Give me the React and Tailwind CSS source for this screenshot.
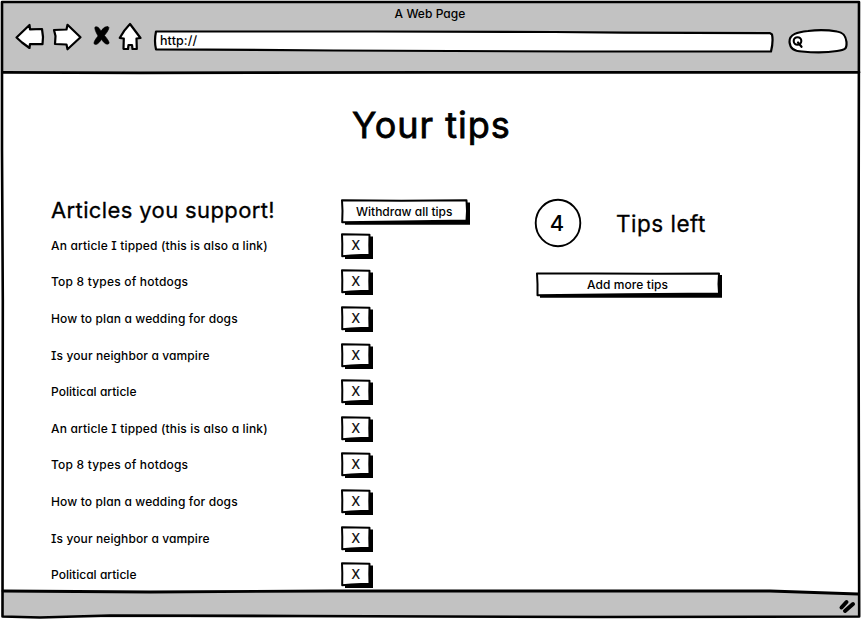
const ARTICLES = [
  { title: "An article I tipped (this is also a link)", spacing: "tracking-[0.16px]" },
  { title: "Top 8 types of hotdogs", spacing: "tracking-[0.2px]" },
  { title: "How to plan a wedding for dogs", spacing: "tracking-[0.13px]" },
  { title: "Is your neighbor a vampire", spacing: "tracking-[0.11px]" },
  { title: "Political article", spacing: "tracking-[0.03px]" },
];
const ROWS = [...ARTICLES, ...ARTICLES];

function SketchFrame({ width, height, children }) {
  return (
    <svg
      className="pointer-events-none absolute left-0 top-0 overflow-visible"
      width={width}
      height={height}
      viewBox={`0 0 ${width} ${height}`}
      fill="none"
      stroke="#000"
      strokeWidth="2"
      strokeLinejoin="round"
      strokeLinecap="round"
    >
      {children}
    </svg>
  );
}

function RemoveButton() {
  return (
    <button className="relative h-[26px] w-[32px] shrink-0 text-[12.5px] font-normal">
      <SketchFrame width={32} height={26}>
        <path d="M4 26 V22 L29 21 L28.500 3.500 H32 V26 Z" fill="#000" stroke="none" />
        <path d="M1 1.300 Q14 1.500 28.500 1.800 L28.300 12 L28.500 21.800 L20 22 L10 22.600 L1.200 23.200 L1.300 11 Z" fill="#fff" />
      </SketchFrame>
      <span className="absolute left-[10.500px] top-[4px] leading-[18px] [-webkit-text-stroke:0.2px_#000]">X</span>
    </button>
  );
}

function WithdrawButton() {
  return (
    <button className="relative block h-[26px] w-[129px] text-[12px]">
      <SketchFrame width={129} height={26}>
        <path d="M4 25.800 V22 L126 21 V3.500 H129 V25.800 Z" fill="#000" stroke="none" />
        <path d="M1 1.200 L60 1.800 L125.500 1.200 L126 12 L125.500 21.500 L60 22.400 L1.200 23.200 L1.500 12 Z" fill="#fff" />
      </SketchFrame>
      <span className="absolute left-[15px] top-[4px] whitespace-nowrap leading-[18px]">Withdraw all tips</span>
    </button>
  );
}

function AddButton() {
  return (
    <button className="relative block h-[26px] w-[186px] text-[12px]">
      <SketchFrame width={186} height={26}>
        <path d="M4 25.800 V22 L183 21 V3 H186 V25.800 Z" fill="#000" stroke="none" />
        <path d="M1 1.500 L60 1.600 L120 1.800 L183 1.500 L182.500 12 L183 21.500 L90 22.300 L1.500 23.300 L1.500 12 Z" fill="#fff" />
      </SketchFrame>
      <span className="absolute left-[51px] top-[4px] whitespace-nowrap leading-[18px] tracking-[0.08px]">Add more tips</span>
    </button>
  );
}

function BrowserBar() {
  return (
    <header className="relative h-[73px] shrink-0 bg-[#c2c2c2]">
      <p className="h-[26px] pr-[1px] pt-[5px] text-center text-[12px] leading-[18px] tracking-[0.05px]">A Web Page</p>
      <nav className="flex">
        <svg width="150" height="34" viewBox="0 22 150 34" className="-mt-1 shrink-0" fill="#fff" stroke="#000" strokeWidth="2.2" strokeLinejoin="round">
          <path d="M16.500 37.500 L29.500 25 L30 29.300 L42 29 L43 37 L42.500 44.200 L30 44 L29.500 48 L22 42.500 Z" />
          <path d="M54 30 L66.500 29.500 L67.500 24.800 L80.500 37.300 L67.500 49.300 L66.500 44.500 L55 44 L55.500 36 Z" />
          <path d="M130 24 L140.500 38 L136.500 38.500 L136.800 49 L132.500 49 L132 45 H128.500 L128 49 L123.500 48.800 L123.800 38.500 L119.700 38 Q124 30 130 24 Z" />
          <path d="M95 27 Q98 25.500 101 31 Q104 26 108 26.500 Q111 27.500 104.500 35.500 Q110 42 109 43.500 Q106 46 101.500 39.500 Q97 46 94.200 44 Q93 42 98 36 Q94 29 95 27 Z" fill="#000" stroke="#000" strokeWidth="0.6" />
        </svg>
        <div className="relative ml-[4px] mt-[4px] h-[22px] w-[620px]">
          <SketchFrame width={620} height={22}>
            <path d="M2 1.500 L220 1.500 L400 2 L470 2.600 L616 3.200 L618 4.500 Q619.500 11 617 21.500 L420 21.500 L180 20.500 L2 19.300 Q0 11 2 1.500 Z" fill="#fff" strokeWidth="2.200" />
          </SketchFrame>
          <span className="absolute left-[6px] top-[2px] text-[12.5px] leading-[18px] tracking-[0.1px]">http://</span>
        </div>
        <div className="relative ml-[14px] mt-[2px] h-[26px] w-[60px]">
          <SketchFrame width={60} height={26}>
            <path d="M1.500 14 C1 6 10 4 20 3 Q35 1 49 3.500 C57 4.500 58 10 58.500 14 C59 21 57 22 49 23 Q34 25.500 14 23.500 C6 23.500 2 20 1.500 14 Z" fill="#fff" strokeWidth="2.200" />
            <circle cx="9.500" cy="13" r="3.800" strokeWidth="2.100" />
            <path d="M10 14.500 L13.500 18.800" strokeWidth="2.200" />
          </SketchFrame>
        </div>
      </nav>
    </header>
  );
}

export default function App() {
  return (
    <div className="relative flex h-[619px] w-[861px] flex-col overflow-hidden bg-white font-['Inter',sans-serif] font-medium text-black [font-feature-settings:'cv11','cv08']">
      <BrowserBar />
      <main className="h-[519px] shrink-0 pt-[26px]">
        <h1 className="pl-[352px] pt-[1px] text-[36px] font-normal leading-[50px] tracking-[1px] [-webkit-text-stroke:0.8px_#000]">Your tips</h1>
        <div className="mt-[47px] flex pl-[51px]">
          <section className="w-[484px]">
            <div className="flex h-[30.6px] items-start">
              <h2 className="w-[290px] whitespace-nowrap text-[22px] font-normal leading-[26px] tracking-[0.38px] [-webkit-text-stroke:0.3px_#000]">Articles you support!</h2>
              <div className="pt-[2px]"><WithdrawButton /></div>
            </div>
            <ul className="text-[12px]">
              {ROWS.map((article, i) => (
                <li key={i} className="flex h-[36.6px] items-center">
                  <a className={`w-[290px] whitespace-nowrap leading-[18px] ${article.spacing}`}>{article.title}</a>
                  <RemoveButton />
                </li>
              ))}
            </ul>
          </section>
          <aside>
            <div className="flex items-center pt-[2px]">
              <div className="relative flex h-[48px] w-[47px] items-center justify-center text-[22px]">
                <SketchFrame width={47} height={48}>
                  <ellipse cx="23" cy="24" rx="22.300" ry="23.200" strokeWidth="1.900" />
                </SketchFrame>
                <span className="relative pr-[3px] pt-[1px] font-medium">4</span>
              </div>
              <span className="ml-[34px] pt-[2px] text-[22.5px] font-normal tracking-[0.5px] [-webkit-text-stroke:0.3px_#000]">Tips left</span>
            </div>
            <div className="ml-[1px] mt-[25px]"><AddButton /></div>
          </aside>
        </div>
      </main>
      <footer className="flex h-[27px] shrink-0 justify-end bg-[#c2c2c2]">
        <svg width="24" height="27" viewBox="837 592 24 27" stroke="#000" strokeWidth="4" strokeLinecap="round">
          <path d="M841.500 607.500 L846.500 602" />
          <path d="M845 611 L853 604" />
        </svg>
      </footer>
      <SketchFrame width={861} height={619}>
        <path d="M0 0 H861 V619 H0 Z M3 2 V617.500 H858.500 V2 Z" fill="#fff" fillRule="evenodd" stroke="none" />
        <path d="M700 589 V591 L780 592 L858 595 V589 Z" fill="#fff" stroke="none" />
        <g strokeWidth="2.600">
          <path d="M2 2 L430 2 L859 2 L858.500 300 L859.200 616.500 L600 617 L300 616 L110 615.500 L40 617.500 L2.500 616.500 L2.800 300 L2 150 Z" />
          <path d="M3 72.300 L140 72.800 L430 72.400 L859 72.300" strokeWidth="2.800" />
          <path d="M3 591 L150 592 L330 591 L770 591 L858 594" strokeWidth="2.800" />
        </g>
      </SketchFrame>
    </div>
  );
}
